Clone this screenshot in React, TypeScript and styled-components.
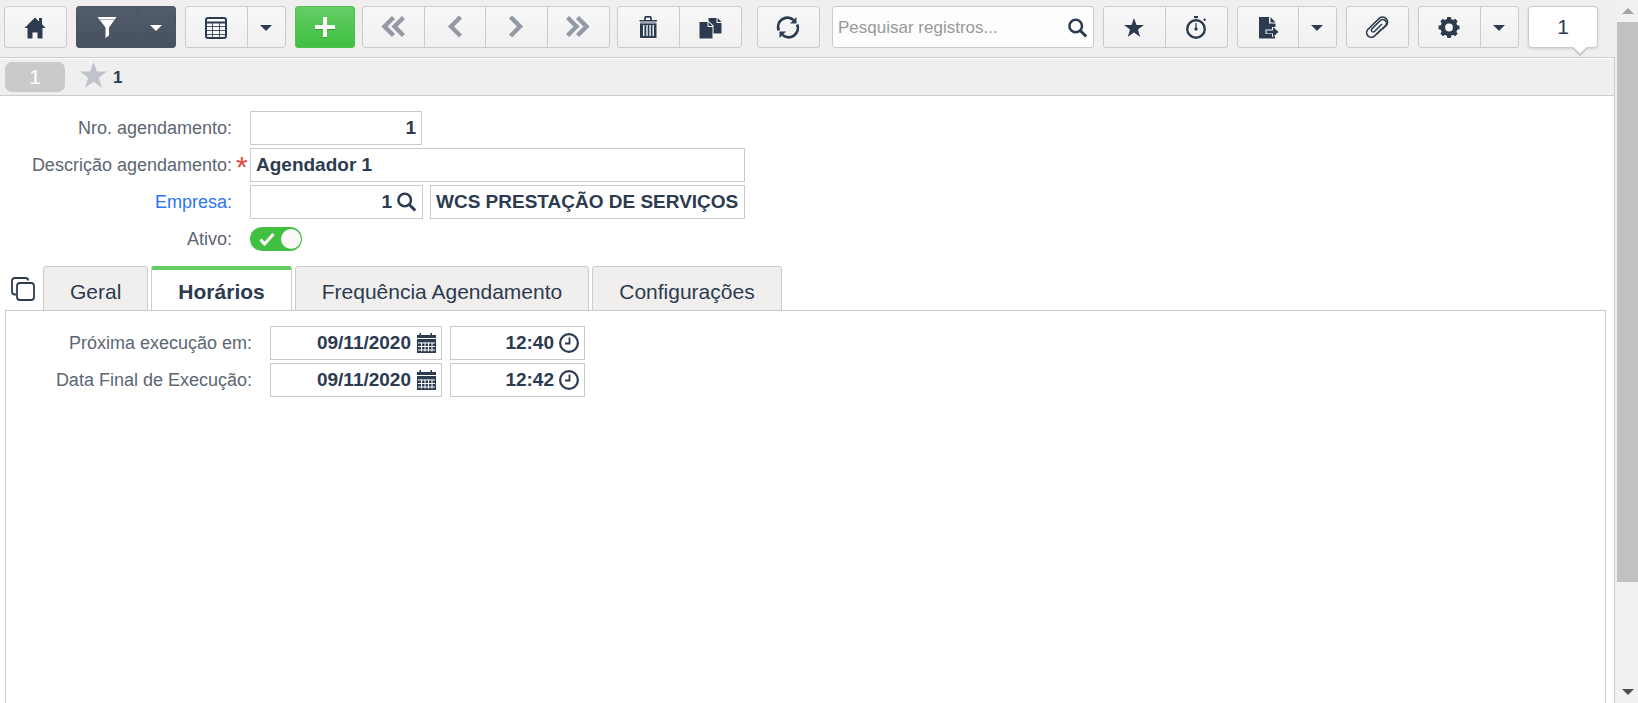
import React from "react";
import styled, { createGlobalStyle, css } from "styled-components";

const ink = "#2c3b4f";
const line = "#cbcbcb";
const green = "#66cc66";

const GlobalStyle = createGlobalStyle`
  *, *::before, *::after { box-sizing: border-box; }
  body {
    margin: 0;
    background: #fff;
    color: ${ink};
    font-family: "Liberation Sans", Arial, sans-serif;
  }
  button, input { font-family: inherit; color: inherit; }
`;

const Shell = styled.div`
  display: grid;
  grid-template-columns: minmax(0, 1fr) 21px;
  height: 100vh;
  overflow: hidden;
  background: #f0efee;
`;

const Main = styled.div`
  display: flex;
  flex-direction: column;
  min-height: 0;
`;

/* ---------- toolbar ---------- */

const Toolbar = styled.header`
  display: flex;
  gap: 9px;
  padding: 6px 19px 9px 4px;
`;

const Group = styled.div<{ $before?: number }>`
  display: flex;
  flex: none;
  height: 42px;
  margin-left: ${(p) => p.$before ?? 0}px;
`;

type Tone = "light" | "dark" | "green" | "muted";

const tones = {
  light: css`
    background: linear-gradient(#f8f8f8, #f0f0f0);
    border-color: ${line};
    svg { filter: drop-shadow(0 1px 0 #fff); }
  `,
  muted: css`
    background: linear-gradient(#f8f8f8, #f0f0f0);
    border-color: ${line};
    color: #939aa6;
  `,
  dark: css`
    background: linear-gradient(#525c6d, #465060);
    border-color: #4a5465;
    color: #fff;
  `,
  green: css`
    background: linear-gradient(#66cc66, #3fbf3f);
    border-color: #4fc14f;
    color: #fff;
    svg { filter: drop-shadow(0 1px 0 #3a9f3a); }
  `,
};

const ToolButton = styled.button<{ $tone?: Tone; $width?: number }>`
  display: flex;
  align-items: center;
  justify-content: center;
  width: ${(p) => p.$width ?? 63}px;
  padding: 2px 1px 0 0;
  border: 1px solid;
  cursor: pointer;
  ${(p) => tones[p.$tone ?? "light"]}
  &:first-child { border-radius: 3px 0 0 3px; }
  &:last-child { border-radius: 0 3px 3px 0; }
  &:only-child { border-radius: 3px; }
  & + & { margin-left: -1px; }
`;

const SearchBox = styled.div`
  display: flex;
  flex: 1;
  align-items: center;
  min-width: 160px;
  height: 42px;
  margin-left: 3px;
  padding: 2px 5px 0;
  background: #fdfdfd;
  border: 1px solid ${line};
  border-radius: 3px;
`;

const SearchInput = styled.input`
  flex: 1;
  min-width: 0;
  padding: 0;
  border: 0;
  outline: 0;
  background: none;
  font-size: 17px;
  &::placeholder { color: #999; opacity: 1; }
`;

const IconButton = styled.button`
  display: flex;
  flex: none;
  padding: 0;
  border: 0;
  background: none;
  cursor: pointer;
`;

const CountBubble = styled.button`
  position: relative;
  flex: none;
  width: 70px;
  height: 42px;
  padding: 0;
  background: #fff;
  border: 1px solid ${line};
  border-radius: 4px;
  box-shadow: 0 1px 3px rgba(0, 0, 0, 0.12);
  font-size: 21px;
  &::after {
    content: "";
    position: absolute;
    right: 11px;
    bottom: -7px;
    width: 12px;
    height: 12px;
    background: #fff;
    border: solid ${line};
    border-width: 0 2px 2px 0;
    transform: rotate(45deg);
  }
`;

/* ---------- page ---------- */

const Page = styled.main`
  display: flex;
  flex: 1;
  flex-direction: column;
  min-height: 0;
  margin-right: 2px;
  background: #fff;
  border: solid ${line};
  border-width: 1px 1px 0 0;
`;

const RecordBar = styled.div`
  display: flex;
  align-items: center;
  flex: none;
  height: 38px;
  padding-left: 5px;
  background: #efefef;
  border-top: 1px solid #fff;
  border-bottom: 1px solid ${line};
`;

const RecordTag = styled.span`
  width: 60px;
  margin-right: 15px;
  background: #cacaca;
  border-radius: 7px;
  color: #fff;
  font-size: 21px;
  line-height: 30px;
  text-align: center;
`;

const RecordStar = styled.span`
  display: flex;
  padding-bottom: 3px;
`;

const RecordName = styled.strong`
  padding: 2px 0 0 6px;
  font-size: 17px;
`;

const Form = styled.form<{ $labels: number }>`
  display: grid;
  grid-template-columns: ${(p) => p.$labels}px minmax(0, 1fr);
  grid-auto-rows: 34px;
  row-gap: 3px;
  align-items: center;
`;

const Label = styled.label`
  display: flex;
  justify-content: flex-end;
  padding-right: 18px;
  color: #5b6672;
  font-size: 18px;
  line-height: 22px;
  white-space: nowrap;
  a { color: #2b74f7; text-decoration: none; }
`;

const Required = styled.span`
  width: 18px;
  height: 22px;
  margin-right: -18px;
  padding-left: 4px;
  color: #e04a3f;
  font-size: 30px;
  line-height: 26px;
`;

const Fields = styled.div<{ $gap?: number }>`
  display: flex;
  gap: ${(p) => p.$gap ?? 8}px;
`;

const Field = styled.div<{ $width: number }>`
  display: flex;
  align-items: center;
  gap: 5px;
  width: ${(p) => p.$width}px;
  height: 34px;
  padding: 0 5px;
  background: #fff;
  border: 1px solid ${line};
`;

const TextInput = styled.input<{ $right?: boolean }>`
  flex: 1;
  min-width: 0;
  height: 30px;
  padding: 0;
  border: 0;
  outline: 0;
  background: none;
  font-size: 19px;
  font-weight: bold;
  text-align: ${(p) => (p.$right ? "right" : "left")};
`;

const Toggle = styled.label`
  position: relative;
  display: flex;
  align-items: center;
  justify-content: space-between;
  width: 52px;
  height: 24px;
  padding: 0 1px 0 9px;
  background: #40bf40;
  border-radius: 12px;
  color: #fff;
  cursor: pointer;
  input {
    position: absolute;
    inset: 0;
    margin: 0;
    opacity: 0;
  }
  &::after {
    content: "";
    width: 20px;
    height: 20px;
    background: #fafafa;
    border-radius: 50%;
  }
`;

const Header = styled.section`
  padding: 15px 0 0;
`;

const TabBar = styled.div`
  display: flex;
  flex: none;
  gap: 3px;
  height: 45px;
  margin: 10px 9px -1px 11px;
`;

const TabList = styled.div`
  display: flex;
  gap: 3px;
  margin-left: 5px;
`;

const CopyTabs = styled(IconButton)`
  align-self: center;
`;

const Tab = styled.button<{ $active?: boolean }>`
  padding: 7px 26px 0;
  border: 1px solid #cfcbcb;
  border-radius: 3px 3px 0 0;
  background: #f0efee;
  font-size: 21px;
  white-space: nowrap;
  cursor: pointer;
  ${(p) =>
    p.$active &&
    css`
      padding-top: 4px;
      background: #fff;
      border-top: 4px solid ${green};
      border-bottom-color: #fff;
      font-weight: bold;
    `}
`;

const Panel = styled.section`
  flex: 1;
  margin: 0 8px 0 5px;
  padding: 15px 0;
  border: solid #cbcbcb;
  border-width: 1px 1px 0;
`;

/* ---------- scroll bar ---------- */

const ScrollTrack = styled.div`
  display: flex;
  flex-direction: column;
  background: #f1f1f1;
`;

const ScrollArrow = styled.button`
  display: flex;
  align-items: center;
  justify-content: center;
  flex: none;
  height: 22px;
  padding: 0;
  border: 0;
  background: none;
`;

const ScrollLane = styled.div`
  flex: 1;
`;

const ScrollThumb = styled.div`
  height: 85%;
  background: #c1c1c1;
`;

/* ---------- icons ---------- */

const Svg = ({ w = 24, h = 24, children }: { w?: number; h?: number; children: React.ReactNode }) => (
  <svg width={w} height={h} viewBox={`0 0 ${w} ${h}`} fill="currentColor" aria-hidden="true">
    {children}
  </svg>
);

const HomeIcon = () => (
  <Svg>
    <path d="M12 1.500 16 5.400V2h3v6.200L22.500 12h-3v10.500h-5v-6h-5v6h-5V12h-3z" />
  </Svg>
);
const FilterIcon = () => (
  <Svg>
    <path d="M2.500 1h19L14 11.500v8L10.500 22V11.500z" />
    <path d="M4.500 3.500h15.500" stroke="#aab0ba" />
  </Svg>
);
const CaretIcon = ({ up, color }: { up?: boolean; color?: string }) => (
  <svg width="12" height="6" viewBox="0 0 12 6" fill={color ?? "currentColor"} aria-hidden="true">
    <path d={up ? "M0 6h12L6 0z" : "M0 0h12L6 6z"} />
  </svg>
);
const TableIcon = () => (
  <Svg w={22} h={22}>
    <rect x="1" y="1" width="20" height="20" rx="2" fill="#f8f8f8" stroke="currentColor" strokeWidth="2" />
    <path d="M1 5.500h20" stroke="currentColor" strokeWidth="2" />
    <path d="M2 9.500h18M2 13.500h18M2 17.500h18M7.500 6v14M14.500 6v14" stroke="currentColor" strokeOpacity="0.850" />
  </Svg>
);
const PlusIcon = () => (
  <Svg w={22} h={22}>
    <path d="M9 0h4v8h8v4h-8v8H9v-8H1V8h8z" />
  </Svg>
);
const ChevronIcon = ({ right, double }: { right?: boolean; double?: boolean }) => (
  <Svg>
    <g
      fill="none"
      stroke="currentColor"
      strokeWidth="4.400"
      transform={right ? "matrix(-1 0 0 1 24 0)" : undefined}
    >
      {double ? (
        <path d="M12.500 1.500 3.500 10.500l9 9M22.500 1.500l-9 9 9 9" />
      ) : (
        <path d="m17.500 1-9.500 9.500 9.500 9.500" />
      )}
    </g>
  </Svg>
);
const TrashIcon = () => (
  <Svg>
    <path d="M9 4V2Q9 0.800 10 0.800h4Q15 0.800 15 2v2" fill="none" stroke="currentColor" strokeWidth="1.700" />
    <path d="M3.500 4h17.500v1.300H3.500z" />
    <path d="M4 5.300h16.500V7.500H4z" fillOpacity="0.450" />
    <path fillRule="evenodd" d="M4 7.500h16.500V22H4zM7 9v11h1.400V9zM10.300 9v11h1.400V9zM13.400 9v11h1.400V9zM16.500 9v11h1.400V9z" />
  </Svg>
);
const CopyIcon = () => (
  <Svg>
    <path d="M10.500 2h8v5h5v10.500h-8V9.500l-5-4.500zM19.500 2l4 4h-4z" />
    <path d="M1.500 6h8v5h5v11.500h-13zM10.500 6l4 4h-4z" />
  </Svg>
);
const RefreshIcon = () => (
  <Svg>
    <g fill="none" stroke="currentColor" strokeWidth="2.800">
      <path d="M2.800 14.500A9.300 9.300 0 0 1 17.500 4M21.200 8.500A9.300 9.300 0 0 1 6.500 19" />
    </g>
    <path d="M20.500 1v6.500h-6.500zM3.500 22v-6.500H10z" />
  </Svg>
);
const SearchIcon = () => (
  <Svg w={20} h={22}>
    <circle cx="7.700" cy="9" r="6.300" fill="none" stroke="currentColor" strokeWidth="2.500" />
    <path d="m12.200 13.500 6 6" stroke="currentColor" strokeWidth="3" />
  </Svg>
);
const StarIcon = ({ size = 20, color }: { size?: number; color?: string }) => (
  <svg width={size} height={size} viewBox="0 0 20 20" fill={color ?? "currentColor"} aria-hidden="true">
    <path d="M10 0l2.500 7H20l-6 4.600L16.200 19 10 14.600 3.800 19 6 11.600 0 7h7.500z" />
  </svg>
);
const StopwatchIcon = () => (
  <Svg>
    <circle cx="12" cy="13" r="8.800" fill="none" stroke="currentColor" strokeWidth="2.400" />
    <path d="M10 0h4v2.200h-4zM19.200 3.700l1.500-1.500 1.500 1.500-1.500 1.500z" />
    <path d="M12 7v6" stroke="currentColor" strokeWidth="1.300" />
    <circle cx="12" cy="13" r="1.700" />
  </Svg>
);
const ExportIcon = () => (
  <Svg>
    <path d="M3 1h10v6.500h6.500V11H16v2.500H9.500V18H16v3l3-1v2.500H3zM14.500 1l5 5.500h-5z" />
    <path d="M10.500 14.500H17V11l5.500 5L17 21v-3.500h-6.500z" />
  </Svg>
);
const ClipIcon = () => (
  <Svg>
    <path
      d="M17 8 9.500 15.500a1.800 1.800 0 0 1-2.600-2.600l8.300-8.300a3.600 3.600 0 0 1 5.100 5.100l-8.600 8.600"
      fill="none"
      stroke="currentColor"
      strokeWidth="1.500"
    />
    <path
      d="M16.500 13 9.700 19.800a4.600 4.600 0 0 1-6.800-6.300L13.500 3a4.900 4.900 0 0 1 7.900 0 4.900 4.900 0 0 1-.4 6.600l-3.500 3.500"
      fill="none"
      stroke="currentColor"
      strokeWidth="1.700"
    />
  </Svg>
);
const GearIcon = () => (
  <Svg>
    <circle cx="12" cy="11.500" r="6.200" fill="none" stroke="currentColor" strokeWidth="4.600" />
    {[0, 45, 90, 135, 180, 225, 270, 315].map((a) => (
      <path key={a} d="M9.300 5 10.300 1h3.400l1 4z" transform={`rotate(${a} 12 11.500)`} />
    ))}
  </Svg>
);
const CheckIcon = () => (
  <Svg w={16} h={14}>
    <path d="m1.500 7.500 4 4.500L14.500 2" fill="none" stroke="currentColor" strokeWidth="3" />
  </Svg>
);
const StackIcon = () => (
  <Svg>
    <g fill="none" stroke="currentColor" strokeWidth="1.800">
      <path d="M5 17.500H4Q1 17.500 1 14.500V4Q1 1 4 1h10.500q2.500 0 2.700 2.500" />
      <rect x="6" y="6" width="17" height="17" rx="3" />
    </g>
  </Svg>
);
const CalendarIcon = () => (
  <Svg w={20} h={20}>
    <path d="M3.500 0h1.500v2h9.500V0H16v2h4v3H1V2h2.500z" />
    <path d="M1 6h19v14H1z" />
    <path d="M2 10h17M2 13.500h17M2 17h17M5.500 9.500v9M9 9.500v9M12.500 9.500v9M16 9.500v9" stroke="#fff" />
  </Svg>
);
const ClockIcon = () => (
  <Svg w={20} h={20}>
    <circle cx="10" cy="10" r="8.900" fill="none" stroke="currentColor" strokeWidth="2.200" />
    <path d="M10.500 4.500v6H6" fill="none" stroke="currentColor" strokeWidth="1.800" />
  </Svg>
);

/* ---------- screen ---------- */

const schedule = [
  { id: "proxima", label: "Próxima execução em:", date: "09/11/2020", time: "12:40" },
  { id: "final", label: "Data Final de Execução:", date: "09/11/2020", time: "12:42" },
];

const tabs = ["Geral", "Horários", "Frequência Agendamento", "Configurações"];

export default function App() {
  const [active, setActive] = React.useState("Horários");

  return (
    <>
      <GlobalStyle />
      <Shell>
        <Main>
          <Toolbar>
            <Group>
              <ToolButton aria-label="Início"><HomeIcon /></ToolButton>
            </Group>
            <Group>
              <ToolButton $tone="dark" $width={62} aria-label="Filtrar"><FilterIcon /></ToolButton>
              <ToolButton $tone="dark" $width={39} aria-label="Opções de filtro"><CaretIcon /></ToolButton>
            </Group>
            <Group>
              <ToolButton aria-label="Grade"><TableIcon /></ToolButton>
              <ToolButton $width={39} aria-label="Opções de grade"><CaretIcon /></ToolButton>
            </Group>
            <Group>
              <ToolButton $tone="green" $width={60} aria-label="Novo"><PlusIcon /></ToolButton>
            </Group>
            <Group $before={-2}>
              <ToolButton $tone="muted" aria-label="Primeiro"><ChevronIcon double /></ToolButton>
              <ToolButton $tone="muted" $width={62} aria-label="Anterior"><ChevronIcon /></ToolButton>
              <ToolButton $tone="muted" aria-label="Próximo"><ChevronIcon right /></ToolButton>
              <ToolButton $tone="muted" aria-label="Último"><ChevronIcon right double /></ToolButton>
            </Group>
            <Group $before={-2}>
              <ToolButton aria-label="Excluir"><TrashIcon /></ToolButton>
              <ToolButton aria-label="Duplicar"><CopyIcon /></ToolButton>
            </Group>
            <Group $before={6}>
              <ToolButton aria-label="Atualizar"><RefreshIcon /></ToolButton>
            </Group>
            <SearchBox>
              <SearchInput placeholder="Pesquisar registros..." aria-label="Pesquisar registros" />
              <IconButton aria-label="Pesquisar"><SearchIcon /></IconButton>
            </SearchBox>
            <Group>
              <ToolButton aria-label="Favorito"><StarIcon /></ToolButton>
              <ToolButton aria-label="Cronômetro"><StopwatchIcon /></ToolButton>
            </Group>
            <Group>
              <ToolButton $width={62} aria-label="Exportar"><ExportIcon /></ToolButton>
              <ToolButton $width={39} aria-label="Opções de exportação"><CaretIcon /></ToolButton>
            </Group>
            <Group>
              <ToolButton aria-label="Anexos"><ClipIcon /></ToolButton>
            </Group>
            <Group>
              <ToolButton aria-label="Configurar"><GearIcon /></ToolButton>
              <ToolButton $width={39} aria-label="Opções de configuração"><CaretIcon /></ToolButton>
            </Group>
            <CountBubble>1</CountBubble>
          </Toolbar>

          <Page>
            <RecordBar>
              <RecordTag>1</RecordTag>
              <RecordStar><StarIcon size={27} color="#c0c3cb" /></RecordStar>
              <RecordName>1</RecordName>
            </RecordBar>

            <Header>
              <Form $labels={250}>
                <Label htmlFor="nro">Nro. agendamento:</Label>
                <Field $width={172}>
                  <TextInput id="nro" $right defaultValue="1" />
                </Field>

                <Label htmlFor="descricao">
                  Descrição agendamento:<Required>*</Required>
                </Label>
                <Field $width={495}>
                  <TextInput id="descricao" defaultValue="Agendador 1" />
                </Field>

                <Label htmlFor="empresa"><a href="#empresa">Empresa:</a></Label>
                <Fields $gap={7}>
                  <Field $width={173}>
                    <TextInput id="empresa" $right defaultValue="1" />
                    <IconButton type="button" aria-label="Buscar empresa"><SearchIcon /></IconButton>
                  </Field>
                  <Field $width={315}>
                    <TextInput aria-label="Nome da empresa" defaultValue="WCS PRESTAÇÃO DE SERVIÇOS" />
                  </Field>
                </Fields>

                <Label htmlFor="ativo">Ativo:</Label>
                <Toggle>
                  <input id="ativo" type="checkbox" defaultChecked />
                  <CheckIcon />
                </Toggle>
              </Form>
            </Header>

            <TabBar>
              <CopyTabs type="button" aria-label="Abas"><StackIcon /></CopyTabs>
              <TabList role="tablist">
                {tabs.map((t) => (
                  <Tab key={t} role="tab" aria-selected={t === active} $active={t === active} onClick={() => setActive(t)}>
                    {t}
                  </Tab>
                ))}
              </TabList>
            </TabBar>

            <Panel>
              <Form $labels={264}>
                {schedule.map((row) => (
                  <React.Fragment key={row.id}>
                    <Label htmlFor={row.id}>{row.label}</Label>
                    <Fields>
                      <Field $width={172}>
                        <TextInput id={row.id} $right defaultValue={row.date} />
                        <IconButton type="button" aria-label="Calendário"><CalendarIcon /></IconButton>
                      </Field>
                      <Field $width={135}>
                        <TextInput aria-label={`Hora, ${row.label}`} $right defaultValue={row.time} />
                        <IconButton type="button" aria-label="Relógio"><ClockIcon /></IconButton>
                      </Field>
                    </Fields>
                  </React.Fragment>
                ))}
              </Form>
            </Panel>
          </Page>
        </Main>

        <ScrollTrack>
          <ScrollArrow aria-label="Rolar para cima"><CaretIcon up color="#a3a3a3" /></ScrollArrow>
          <ScrollLane><ScrollThumb /></ScrollLane>
          <ScrollArrow aria-label="Rolar para baixo"><CaretIcon color="#505050" /></ScrollArrow>
        </ScrollTrack>
      </Shell>
    </>
  );
}
